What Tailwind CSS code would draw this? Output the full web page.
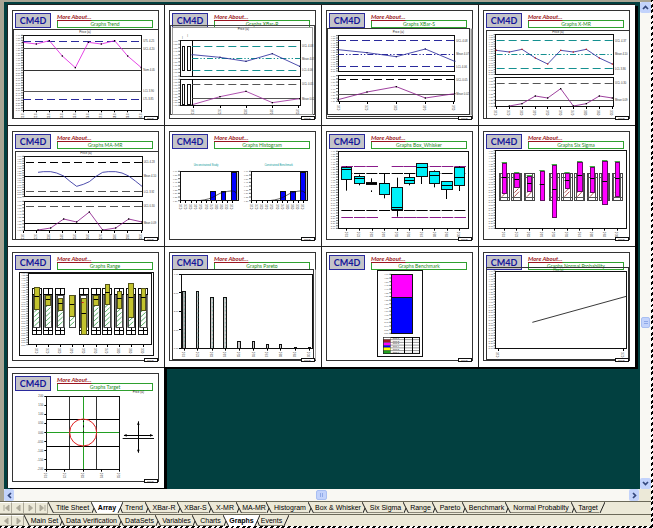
<!DOCTYPE html>
<html lang="en">
<head>
<meta charset="utf-8">
<title>CM4D Graphs</title>
<script src="https://cdn.jsdelivr.net/npm/@tailwindcss/browser@4"></script>
</head>
<body class="h-screen overflow-hidden pr-[2px] pb-[2px] bg-[repeating-linear-gradient(135deg,#000_0px,#000_2px,#fff_2px,#fff_4px)]">
<div class="flex h-full flex-col bg-[#ece9d8] font-['Liberation_Sans',sans-serif] text-[7px] leading-none text-black">
  <div class="flex min-h-0 flex-1 border-t-2 border-l-4 border-[#a9a594]">
    <main class="min-w-0 flex-1 overflow-hidden bg-[#024040] pt-[2px] pr-[5px] pl-[3px]">
      <div id="sheets" class="grid grid-cols-4"></div>
    </main>
    <div class="flex w-[11px] flex-col bg-[#f9f8f3]">
      <button aria-label="Scroll up" class="flex h-[11px] items-center justify-center rounded-[2px] bg-[#c3d3fb]"><svg class="size-[7px]" viewBox="0 0 7 7"><path d="M1 5 3.500 2.500 6 5" fill="none" stroke="#33477c" stroke-width="1.700"/></svg></button>
      <div class="flex-[305]"></div>
      <div class="mx-px flex h-[11px] flex-col items-center justify-center gap-px rounded-[2px] border border-[#a9bff2] bg-[#c3d3fb]"><i class="h-px w-[4px] bg-[#8fa9e8]"></i><i class="h-px w-[4px] bg-[#8fa9e8]"></i></div>
      <div class="flex-[150]"></div>
      <button aria-label="Scroll down" class="flex h-[11px] items-center justify-center rounded-[2px] bg-[#c3d3fb]"><svg class="size-[7px]" viewBox="0 0 7 7"><path d="M1 2 3.500 4.500 6 2" fill="none" stroke="#33477c" stroke-width="1.700"/></svg></button>
    </div>
  </div>
  <div class="flex h-[12px] border-l-4 border-[#a9a594] pr-[12px]">
    <div class="flex flex-1 bg-[#f9f8f3]">
      <button aria-label="Scroll left" class="flex w-[10px] items-center justify-center rounded-[2px] bg-[#c3d3fb]"><svg class="size-[7px]" viewBox="0 0 7 7"><path d="M5 1 2.500 3.500 5 6" fill="none" stroke="#33477c" stroke-width="1.700"/></svg></button>
      <div class="flex-1"></div>
      <div class="my-px flex w-[11px] items-center justify-center gap-px rounded-[2px] border border-[#a9bff2] bg-[#c3d3fb]"><i class="h-[4px] w-px bg-[#8fa9e8]"></i><i class="h-[4px] w-px bg-[#8fa9e8]"></i></div>
      <div class="flex-1"></div>
      <button aria-label="Scroll right" class="flex w-[10px] items-center justify-center rounded-[2px] bg-[#c3d3fb]"><svg class="size-[7px]" viewBox="0 0 7 7"><path d="M2 1 4.500 3.500 2 6" fill="none" stroke="#33477c" stroke-width="1.700"/></svg></button>
    </div>
  </div>
  <nav id="tabs1" aria-label="Sheets" class="flex h-[13px] border-t border-[#6b6959]"></nav>
  <nav id="tabs2" aria-label="Groups" class="flex h-[12px] border-t border-[#6b6959]"></nav>
</div>
<script>
// Sheet tabs
const arrows = {
  first: 'M3 2v6M8 2 4.500 5 8 8Z', prev: 'M7 2 3.500 5 7 8Z',
  next: 'M4 2 7.500 5 4 8Z', last: 'M3 2 6.500 5 3 8ZM8 2v6'
};
const navButton = k => `<button aria-label="${k}" class="flex w-[12px] shrink-0 items-center justify-center border-r border-b border-[#aca899] border-t border-t-white"><svg class="size-[10px]" viewBox="0 0 10 10"><path d="${arrows[k]}" fill="#aca899" stroke="#aca899"/></svg></button>`;
function edge(left, right) {
  const leftOn = left && left.on, rightOn = right && right.on;
  let s = '';
  if (leftOn) s += '<path d="M0 0H6L1 11H0Z" fill="#fff"/>';
  if (rightOn) s += '<path d="M0 0H6V11H5Z" fill="#fff"/>';
  if (left) s += `<path d="${right && !leftOn ? 'M3 6 1 11' : 'M6 0 1 11'}"/>`;
  if (right) s += `<path d="${leftOn ? 'M3.500 6 5.500 11' : 'M0 0 5.500 11'}"/>`;
  return `<svg class="h-[11px] w-[6px] shrink-0" viewBox="0 0 6 11" fill="none" stroke="#222">${s.replace(/fill="#fff"/g, 'fill="#fff" stroke="none"')}</svg>`;
}
function strip(id, keys, tabs) {
  let h = keys.map(navButton).join('');
  tabs.forEach((t, i) => {
    h += edge(tabs[i - 1], t);
    h += `<button class="${t.w} h-[11px] shrink-0 whitespace-nowrap text-center leading-[11px] ${t.on ? 'bg-white font-bold' : 'border-b border-[#8a8778]'}"><span class="-mx-2">${t.n}</span></button>`;
  });
  document.getElementById(id).innerHTML = h + edge(tabs[tabs.length - 1], null);
}
strip('tabs1', ['first', 'prev', 'next', 'last'], [
  {n:'Title Sheet',w:'w-[37px]'},{n:'Array',w:'w-[20px]',on:1},{n:'Trend',w:'w-[22px]'},{n:'XBar-R',w:'w-[26px]'},
  {n:'XBar-S',w:'w-[25px]'},{n:'X-MR',w:'w-[22px]'},{n:'MA-MR',w:'w-[24px]'},{n:'Histogram',w:'w-[36px]'},
  {n:'Box &amp; Whisker',w:'w-[48px]'},{n:'Six Sigma',w:'w-[35px]'},{n:'Range',w:'w-[23px]'},{n:'Pareto',w:'w-[24px]'},
  {n:'Benchmark',w:'w-[37px]'},{n:'Normal Probabilty',w:'w-[60px]'},{n:'Target',w:'w-[22px]'}]);
strip('tabs2', ['prev', 'next'], [
  {n:'Main Set',w:'w-[29px]'},{n:'Data Verification',w:'w-[53px]'},{n:'DataSets',w:'w-[31px]'},{n:'Variables',w:'w-[31px]'},
  {n:'Charts',w:'w-[25px]'},{n:'Graphs',w:'w-[25px]',on:1},{n:'Events',w:'w-[23px]'}]);

// Drawing helpers; three units make one pixel
const px = v => Math.floor(v / 3) * 3 + 1.5;
const NAVY='#2a2a9c', TEAL='#159090', PUR='#8a1a8a', GR='#555', BK='#000';
const rect = (x1,y1,x2,y2,fill='none',stroke='#111',w=3) => `<rect x="${px(x1)}" y="${px(y1)}" width="${px(x2)-px(x1)}" height="${px(y2)-px(y1)}" fill="${fill}" stroke="${stroke}" stroke-width="${w}"/>`;
const hl = (x1,x2,y,c=BK,d='',w=3) => `<path d="M${x1} ${px(y)}H${x2}" stroke="${c}" stroke-width="${w}" stroke-dasharray="${d}"/>`;
const vl = (x,y1,y2,c=BK,w=3) => `<path d="M${px(x)} ${y1}V${y2}" stroke="${c}" stroke-width="${w}"/>`;
const line = (p,c,dot) => `<polyline points="${p}" fill="none" stroke="${c}" stroke-width="2.500"/>` + (dot ? p.split(' ').map(q => { const [x,y]=q.split(','); return `<rect x="${x-2}" y="${y-2}" width="4" height="4" fill="${dot}"/>`; }).join('') : '');
const text = (x,y,s,c='#333',z=8,a='start') => `<text x="${x}" y="${y}" font-size="${z}" fill="${c}" text-anchor="${a}">${s}</text>`;
const yAxis = (x,y1,y2,n) => { let s=''; for (let i=0;i<=n;i++){ const y=y1+(y2-y1)*i/n; s+=`<path d="M${x-6} ${y}H${x}" stroke="#222" stroke-width="2"/>`+text(x-8,y+3,(4.6-i*0.05).toFixed(2),'#555',7,'end'); } return s; };
const xAxis = (xs,y) => xs.map((x,i) => vl(x,y,y+6)+`<text transform="translate(${x+3} ${y+25})rotate(-90)" font-size="8" fill="#333">0${(i+1)%10}.0</text>`).join('');
const LD='24 12', DD='18 6 4 6 4 6';
const tens=[70,109,148,187,226,265,304,344,383,423];
const price=(x,y)=>text(x,y,'Price (a)','#222',9,'middle');

const slides = [
['Trend',21,12, () => rect(39,88,474,355,'none','#333')+price(255,98)+yAxis(69,106,331,30)+rect(69,106,424,331)+hl(69,424,124,NAVY,LD)+hl(69,424,146,GR)+hl(69,424,210,'#333')+hl(69,424,274,GR)+hl(69,424,298,NAVY,LD)
  +line('69,127 109,132 148,122 187,168 226,203 265,127 304,132 344,122 383,168 424,203','#e020e0',BK)
  +text(430,127,'UTL 4.25')+text(430,149,'UCL 4.20')+text(430,213,'Nom 4.05')+text(430,277,'LCL 3.90')+text(430,301,'LTL 3.85')+xAxis(tens,331)],
['XBar-R',12,12, () => rect(32,77,464,342,'none','#444')+rect(38,82,458,342,'none','#999')+price(250,91)+text(66,118,'I','#333')+text(82,112,'I')+yAxis(61,122,228,10)+yAxis(61,238,316,9)
  +rect(61,122,421,228)+vl(97,122,228)+rect(66,139,74,211)+rect(82,139,90,211)+hl(97,421,139,TEAL,LD)+hl(97,421,176,TEAL,DD)+hl(97,421,211,TEAL,LD)
  +line('97,164 180,172 258,184 337,161 419,199',NAVY,'#22226a')+rect(61,238,421,316)+vl(97,238,316)+rect(66,253,74,312)+rect(82,253,90,312)+hl(97,421,253,GR,LD)+hl(97,421,296,GR)
  +line('97,314 180,290 258,274 337,308 419,296','#a030a0',BK)+text(426,142,'UCL 4.08')+text(426,179,'Mean 4.07')+text(426,214,'LCL 4.06')+text(426,256,'UCL 0.05')+text(426,299,'Mean 0.02')+xAxis([99,180,258,337,415],318)],
['XBar-S',3,12, () => rect(23,86,449,342,'none','#333')+vl(453,86,346,'#999',6)+hl(23,456,349,'#333')+price(235,99)+yAxis(54,107,213,15)+yAxis(54,227,304,8)
  +rect(54,107,404,213)+hl(54,404,122,NAVY,LD)+hl(54,404,162,NAVY,DD)+hl(54,404,200,NAVY,LD)+line('54,149 141,158 229,170 316,147 404,184',NAVY,'#22226a')
  +rect(54,227,404,304)+hl(54,404,239,BK,LD)+hl(54,404,282,GR)+line('54,299 141,276 229,260 316,294 404,281',PUR,BK)
  +text(409,125,'UCL 4.08')+text(409,165,'Mean 4.07')+text(409,203,'LCL 4.06')+text(409,242,'UCL 0.05')+text(409,285,'Mean 0.02')+xAxis([57,141,229,316,401],306)],
['X-MR',6,12, () => rect(32,91,461,355,'none','#333')+price(246,100)+yAxis(59,104,223,17)+yAxis(59,233,319,9)+rect(59,104,411,223)+hl(62,411,122,TEAL,LD)+hl(62,411,163,TEAL,DD)+hl(62,411,206,TEAL,LD)
  +line('61,151 100,156 138,148 178,174 215,192 254,151 292,156 331,148 370,174 409,192',NAVY,'#c02020')+rect(59,233,411,319)+hl(62,411,249,GR,LD)+hl(60,411,300,GR)
  +line('100,318 138,311 178,288 215,294 254,266 292,318 331,311 370,288 409,294',PUR,BK)+text(417,125,'UCL 4.37')+text(417,166,'Mean 4.10')+text(417,209,'LCL 3.86')+text(417,252,'UCL 0.30')+text(417,303,'Mean 0.09')+xAxis([61,100,138,178,215,254,292,331,370,408],321)],
['MA-MR',21,9, () => rect(45,88,474,352,'none','#333')+price(258,97)+yAxis(73,103,224,17)+yAxis(73,238,325,9)+rect(73,103,426,224)+hl(78,426,121,BK,LD)+hl(73,426,163,BK)+hl(78,426,209,GR,LD)
  +line('114,151 130,149 152,149 170,153 191,162 210,178 230,193 250,187 268,179 288,163 308,151 325,149 347,149 366,153 386,162 406,177 426,193',NAVY)+rect(73,238,426,325)+hl(78,426,253,GR,LD)+hl(73,426,303,BK)
  +line('114,324 152,318 191,291 230,300 268,270 308,324 347,318 386,291 426,300',PUR,BK)+text(431,124,'UCL 4.28')+text(431,166,'Mean 4.10')+text(431,212,'LCL 3.92')+text(431,256,'UCL 0.30')+text(431,306,'Mean 0.09')+xAxis(tens,327)],
['Histogram',12,9, () => [[60,235,151,183,214,'Unconstrained Study',138],[273,442,362,391,422,'Constrained Benchmark',356]].map(([a,b,c,d,e,t,m]) =>
  yAxis(a,148,236,8)+rect(e+14,148,b,236,'#ccc')+rect(a,148,b,236)+rect(c,208,c+14,236,'#00f')+rect(d,208,d+14,236,'#00f')+rect(e,150,e+14,236,'#00f')
  +`<path d="M${c-34} 236Q${c} 232 ${c+14} 222T${d+20} 208T${b-7} 214" fill="none" stroke="#111" stroke-width="2"/>`+text(m,131,t,'#129a9a',8,'middle')+xAxis([...Array(11)].map((_,i)=>a+2+i*15.5),237)).join('')],
['Box_Whisker',3,9, () => { let s=yAxis(54,88,319,30)+rect(54,88,445,319);
  [[64,95,136,173,142,133,206],[102,133,163,184,169,158,190],[139,170,181,188,184,169,188],[177,208,184,217,184,156,229],[215,247,196,262,257,167,284],[252,284,167,184,175,156,190],[289,321,124,163,136,124,186],[329,359,149,185,160,145,196],[365,396,179,202,190,179,231],[403,434,135,190,165,133,207]]
  .forEach((b,i)=>{ const m=(b[0]+b[1])/2; if(i!=3) s+=hl(b[0],b[1]+4,133,PUR)+hl(b[0],b[1]+4,286,PUR); s+=hl(b[0],b[1]+2,155)+hl(b[0],b[1]+2,266)+vl(m,b[5],b[6])+rect(b[0],b[2],b[1],b[3],'#00f0f8')+hl(b[0],b[1],b[4]); });
  return s+vl(154,205,210)+xAxis([80,118,156,193,231,268,306,344,381,418],320); }],
['Six Sigma',6,9, () => { let s=yAxis(59,86,319,30)+rect(59,86,451,319);
  [[85,124,214],[122,154,196],[160,162,207],[198,147,235],[235,131,286],[273,154,199],[311,121,207],[349,136,210],[386,118,246],[424,121,223]]
  .forEach(([c,a,b],i)=>{ if(i!=3) s+=rect(c-16,154,c+15,235,'#fff','#444')+hl(c-16,c+15,166,GR)+hl(c-16,c+15,225,GR)+vl(c-11,156,235,'#555')+vl(c+10,156,235,'#555')+`<path d="M${c-7} 212 ${c+5} 200M${c-7} 224 ${c+7} 209" stroke="#a03030" stroke-width="2.500"/>`;
   s+=hl(c-8,c+8,a-3,'#40b040')+rect(c-6,a,c+7,b,'#f0f','#601060')+hl(c-7,c+7,a+(b-a)*.47); });
  return s+xAxis([85,122,160,198,235,273,311,349,386,424],320); }],
['Range',21,6, () => { let s=rect(58,84,461,335)+yAxis(85,87,302,30)+rect(85,87,455,302);
  [[110,130,196],[144,153,183],[181,164,200],[216,154,218],[251,163,271],[288,153,183],[322,120,180],[358,141,192],[393,118,220],[430,133,199]]
  .forEach(([c,a,b],i)=>{ if(i!=3) s+=rect(c-14,133,c+13,271,'#fff')+hl(c-14,c+13,150)+hl(c-14,c+13,260)+vl(c,133,271)+vl(c-11,153,251,'#777')+vl(c+11,153,251,'#777');
   s+=rect(c-9,153,c+9,251,'#fff','#444')+[190,204,218,232,246].map(y=>`<path d="M${c-7} ${y}L${c+7} ${y-13}" stroke="#35a045" stroke-width="2.500"/>`).join('')+rect(c-7,a,c+7,b,'#c3c32e','#55551a')+hl(c-7,c+7,a+(b-a)*.42); });
  return s+hl(245,251,175,'#d02020')+xAxis([110,144,181,216,251,288,322,358,393,430],303); }],
['Pareto',492,6, () => rect(517,77,941,347,'none','#333')+vl(946,77,347,'#aaa')+rect(543,91,937,313)+[91,146,201,257,313].map((y,i)=>hl(537,543,y)+text(535,y+3,(4-i)+'.00','#333',7,'end')).join('')
  +[[548,142],[589,142],[632,159],[671,159],[713,293],[757,293],[799,301],[838,301],[883,310],[925,310]].map(([x,y],i)=>rect(x,y,x+7,313,i==0?'#aaa':'#ccc')+(y<200?`<path d="M${x+5} ${y+4}V310" stroke="#3aa090" stroke-width="2" stroke-dasharray="3 9"/>`:'')).join('')+xAxis([552,593,636,675,717,761,802,842,886,928],314)],
['Benchmark',3,6, () => rect(171,78,307,338)+yAxis(214,91,268,16)+rect(214,91,278,160,'#f0f')+rect(214,160,278,268,'#00f')+rect(189,279,298,328)
  +['#fff','#a02020','#f0f','#00f','#ff0','#20a020'].map((c,i)=>rect(189,279+i*8.2,210,287+i*8.2,c,'#333',1)+`<path d="M210 ${287+i*8.2}H298" stroke="#333" stroke-width="1.500"/>`+text(218,285+i*8.2,'Item '+(i+1),'#222',7)).join('')+vl(253,279,328)+vl(277,279,328)],
['Normal Probability',474,6, () => rect(500,69,924,347,'none','#333')+text(715,80,'Price (a)','#186818',8,'middle')+yAxis(527,81,313,30)+rect(527,81,919,313)+line('637,235 919,157','#111')+xAxis([534,910],315)],
['Target',21,9, () => rect(139,97,357,315)+vl(208,97,315,'#333')+vl(290,97,315,'#333')+hl(139,357,165)+hl(139,357,246)+vl(250,97,315,'#22a022')+hl(139,357,206,'#22a022')
  +'<circle cx="249.500" cy="205.500" r="40.500" fill="none" stroke="#e02020" stroke-width="3"/>'+vl(250,170,174)+vl(250,184,190)+vl(250,202,206)
  +[97,124,151,178,206,233,260,287,315].map((y,i)=>hl(133,139,y)+text(130,y+3,(2-i*.5).toFixed(2),'#333',8,'end')).join('')+xAxis([139,194,250,305,357],317)
  +price(415,86)+vl(415,172,266)+hl(372,458,214)+hl(368,462,223,'#111')+'<path d="M411 182l4-9 4 9ZM411 257l4 9 4-9ZM380 210l-9 4 9 4ZM450 210l9 4-9 4Z"/>']
];
document.getElementById('sheets').innerHTML = slides.map(([t,ox,oy,draw]) => `
<article class="relative h-[121px] border-t border-l border-[#222] bg-white pt-[5px] pr-[5px] pb-[6px] pl-[4px] shadow-[3px_2px_0_#000]">
  <div class="flex h-full items-start gap-[6px] border border-[#333] p-[2px]">
    <div class="flex h-[15px] w-[36px] items-center justify-center border border-[#2a2a9c] bg-[#c4c4c8] font-['Comic_Sans_MS','Lato',sans-serif] text-[9px] font-bold text-[#14149a]">CM4D</div>
    <div class="min-w-0 flex-1 pr-[3px]">
      <h2 class="h-[7px] font-['Comic_Sans_MS','Lato',sans-serif] text-[6px] leading-[7px] font-bold whitespace-nowrap text-[#9a1420] italic underline">More About...</h2>
      <h3 class="h-[8px] border border-[#2fa02f] text-center font-['Comic_Sans_MS','Lato',sans-serif] text-[5px] leading-[6px] whitespace-nowrap text-[#188a18]">Graphs ${t}</h3>
    </div>
  </div>
  <svg role="img" aria-label="${t} chart" class="absolute -top-px -left-px h-[121px] w-[calc(100%+1px)] font-['Liberation_Sans',sans-serif]" viewBox="${ox} ${oy} 471 363">${draw()}${rect(ox+412,oy+337,ox+452,oy+345,'#fff','#111')}${text(ox+420,oy+344,'CM4D','#222',7)}</svg>
</article>`).join('');
</script>
</body>
</html>
